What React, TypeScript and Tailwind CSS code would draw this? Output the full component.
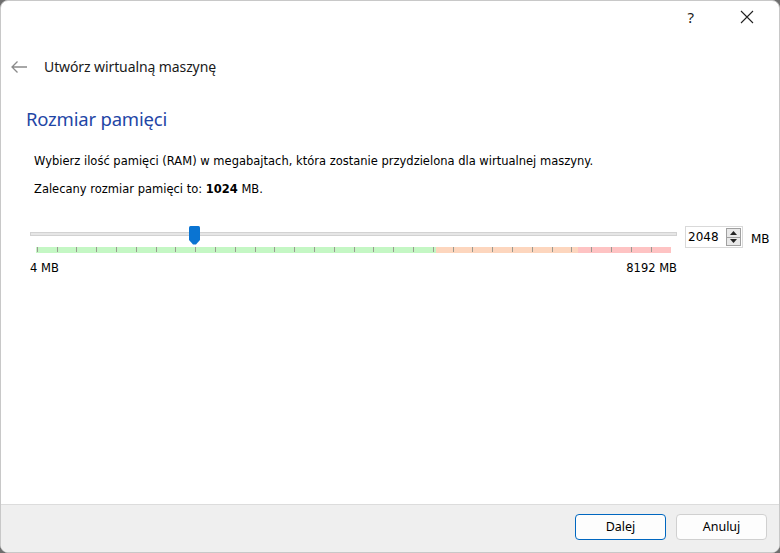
import React from "react";

const segoe = { fontFamily: '"Noto Sans", "Open Sans", sans-serif' };
const tahoma = { fontFamily: '"DejaVu Sans", Verdana, sans-serif' };

function Ticks() {
  const ticks = Array.from({ length: 32 }, (_, i) => 35.7 + i * 19.8 - 35);
  return (
    <>
      {ticks.map((x, i) => (
        <div
          key={i}
          className="absolute top-0 h-[5px] w-px bg-[#9a9a90]"
          style={{ left: x }}
        />
      ))}
    </>
  );
}

export default function App() {
  return (
    <div className="w-[780px] h-[553px] bg-[#6e6e6e] overflow-hidden">
      <div className="w-full h-full bg-white rounded-[8px] border border-[#c8c8c8] flex flex-col overflow-hidden">
        {/* title bar */}
        <div className="h-[36px] flex items-center justify-end pr-[20px] gap-[46px] text-[#1a1a1a] pb-[4px]" style={segoe}>
          <span className="text-[15px] leading-none">?</span>
          <svg width="14" height="14" viewBox="0 0 14 14" className="mr-[5px]">
            <path d="M1 1 L13 13 M13 1 L1 13" stroke="#222" strokeWidth="1.1" fill="none" />
          </svg>
        </div>
        {/* header */}
        <div className="h-[62px] flex items-center pl-[9px] pb-[3px]">
          <svg width="18" height="14" viewBox="0 0 18 14">
            <path d="M17 7 H2 M7.5 1.5 L2 7 L7.5 12.5" stroke="#8a8a8a" strokeWidth="1.3" fill="none" />
          </svg>
          <span className="ml-[16px] text-[14px] tracking-[-0.1px] text-[#1a1a1a]" style={segoe}>
            Utwórz wirtualną maszynę
          </span>
        </div>
        {/* content */}
        <div className="flex-1 flex flex-col pl-[25px]">
          <div className="text-[18.5px] tracking-[-0.2px] text-[#1f46a6] leading-[26px] mt-[7px]" style={segoe}>
            Rozmiar pamięci
          </div>
          <div className="pl-[8px] mt-[22px] text-[11.5px] text-black leading-[14px]" style={tahoma}>
            Wybierz ilość pamięci (RAM) w megabajtach, która zostanie przydzielona dla wirtualnej maszyny.
          </div>
          <div className="pl-[8px] mt-[14px] text-[11.5px] text-black leading-[14px]" style={tahoma}>
            Zalecany rozmiar pamięci to: <b>1024</b> MB.
          </div>
          {/* slider row */}
          <div className="flex mt-[30px] ml-[4px]">
            <div className="w-[647px] flex flex-col">
              <div className="relative h-[21px]">
                <div className="absolute left-0 right-0 top-[6px] h-[4px] bg-[#e6e6e6] border border-[#d2d2d2]" />
                <svg className="absolute top-0" style={{ left: 159 }} width="11" height="19" viewBox="0 0 11 19">
                  <path d="M1.5 0 H9.5 Q11 0 11 1.5 V14 L7 18.5 H4 L0 14 V1.5 Q0 0 1.5 0 Z" fill="#0a74d2" />
                </svg>
              </div>
              <div className="relative ml-[6px] w-[635px] h-[6px] flex">
                <div className="w-[400px] h-full bg-[#c4f7c4]" />
                <div className="w-[142px] h-full bg-[#fdd6be]" />
                <div className="flex-1 h-full bg-[#fec3c3]" />
                <Ticks />
              </div>
              <div className="flex justify-between mt-[8px] text-[11.5px] text-black leading-[14px]" style={tahoma}>
                <span>4 MB</span>
                <span>8192 MB</span>
              </div>
            </div>
            <div className="ml-[8px] flex items-start">
              <div className="w-[58px] h-[22px] border border-[#d9d9d9] flex items-center bg-white">
                <span className="ml-[2px] flex-1 text-[12px] text-black" style={tahoma}>2048</span>
                <div className="w-[15px] h-[18px] mr-[1px] border border-[#a0a0a0] bg-[#e8e8e8] flex flex-col">
                  <div className="flex-1 flex items-center justify-center border-b border-[#a0a0a0]">
                    <svg width="7" height="4" viewBox="0 0 7 4"><path d="M0 4 L3.5 0 L7 4 Z" fill="#222" /></svg>
                  </div>
                  <div className="flex-1 flex items-center justify-center">
                    <svg width="7" height="4" viewBox="0 0 7 4"><path d="M0 0 L3.5 4 L7 0 Z" fill="#222" /></svg>
                  </div>
                </div>
              </div>
              <span className="ml-[8px] mt-[4px] text-[12px] text-black" style={tahoma}>MB</span>
            </div>
          </div>
        </div>
        {/* footer */}
        <div className="h-[48px] bg-[#efefef] border-t border-[#dcdcdc] flex items-start justify-end pt-[9px] pr-[12px] gap-[10px]">
          <button className="w-[91px] h-[26px] rounded-[4px] bg-[#fdfdfd] border border-[#0067c0] text-[12.5px] text-black" style={segoe}>
            Dalej
          </button>
          <button className="w-[91px] h-[26px] rounded-[4px] bg-[#fdfdfd] border border-[#d0d0d0] text-[12.5px] text-black" style={segoe}>
            Anuluj
          </button>
        </div>
      </div>
    </div>
  );
}
